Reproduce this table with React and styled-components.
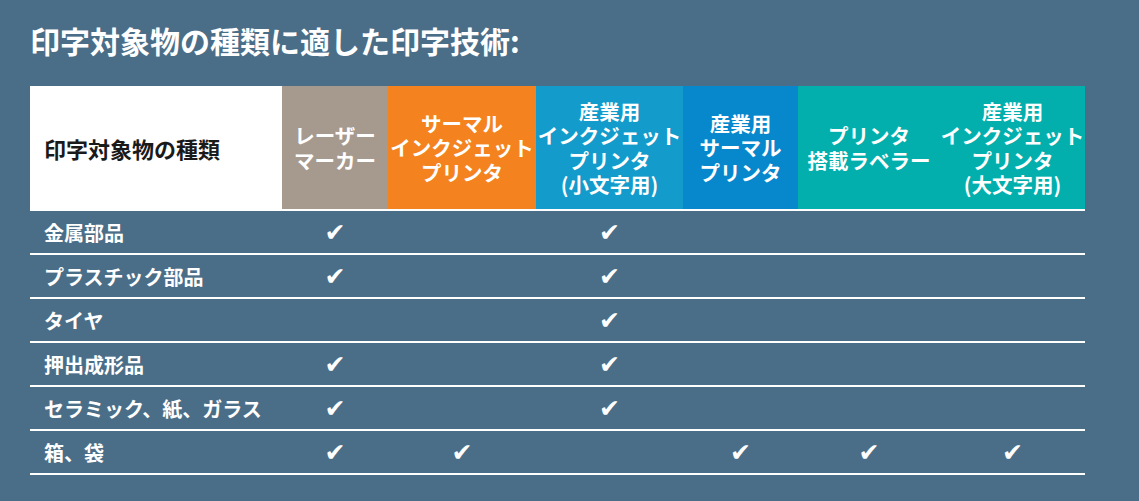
import React from 'react'
import styled, { createGlobalStyle } from 'styled-components'

const GlobalStyle = createGlobalStyle`
  html, body {
    margin: 0;
    padding: 0;
    background: #4b6e88;
  }
  body {
    font-family: "Noto Sans CJK JP", "Noto Sans", sans-serif;
    color: #fff;
  }
`

const Page = styled.div`
  width: 1139px;
  height: 501px;
  padding: 19px 0 0 30px;
  box-sizing: border-box;
  background: #4b6e88;
`

const Title = styled.h1`
  margin: 0 0 25px;
  font-size: 30px;
  line-height: 42px;
  font-weight: 700;
`

const Table = styled.div`
  width: 1055px;
  display: grid;
  grid-template-columns: 252px 106px 148px 147px 115px 142px 145px;
`

const Corner = styled.div`
  background: #fff;
  color: #1a1a1a;
  height: 123px;
  display: flex;
  align-items: center;
  padding-left: 14px;
  font-size: 22px;
  font-weight: 700;
`

const HeadCell = styled.div`
  background: ${p => p.$bg};
  height: 123px;
  display: flex;
  align-items: center;
  justify-content: center;
  text-align: center;
  font-size: 20.5px;
  line-height: 24.3px;
  font-weight: 700;
  white-space: nowrap;
`

const Label = styled.div`
  height: 42px;
  border-top: 2px solid #fff;
  display: flex;
  align-items: center;
  padding-left: 14px;
  font-size: 20px;
  font-weight: 700;
  ${p => p.$last && 'border-bottom: 2px solid #fff;'}
`

const Mark = styled.div`
  height: 42px;
  border-top: 2px solid #fff;
  display: flex;
  align-items: center;
  justify-content: center;
  font-family: "DejaVu Sans", sans-serif;
  font-size: 25px;
  ${p => p.$last && 'border-bottom: 2px solid #fff;'}
`

const columns = [
  { bg: '#a69a8f', lines: ['レーザー', 'マーカー'] },
  { bg: '#f4821f', lines: ['サーマル', 'インクジェット', 'プリンタ'] },
  { bg: '#139bcb', lines: ['産業用', 'インクジェット', 'プリンタ', '(小文字用)'] },
  { bg: '#0787cc', lines: ['産業用', 'サーマル', 'プリンタ'] },
  { bg: '#02afad', lines: ['プリンタ', '搭載ラベラー'] },
  { bg: '#02afad', lines: ['産業用', 'インクジェット', 'プリンタ', '(大文字用)'] },
]

const rows = [
  { name: '金属部品', marks: [1, 0, 1, 0, 0, 0] },
  { name: 'プラスチック部品', marks: [1, 0, 1, 0, 0, 0] },
  { name: 'タイヤ', marks: [0, 0, 1, 0, 0, 0] },
  { name: '押出成形品', marks: [1, 0, 1, 0, 0, 0] },
  { name: 'セラミック、紙、ガラス', marks: [1, 0, 1, 0, 0, 0] },
  { name: '箱、袋', marks: [1, 1, 0, 1, 1, 1] },
]

export default function App() {
  return (
    <>
      <GlobalStyle />
      <Page>
        <Title>印字対象物の種類に適した印字技術:</Title>
        <Table>
          <Corner>印字対象物の種類</Corner>
          {columns.map((col, i) => (
            <HeadCell key={i} $bg={col.bg}>
              <span>
                {col.lines.map((line, j) => (
                  <React.Fragment key={j}>
                    {j > 0 && <br />}
                    {line}
                  </React.Fragment>
                ))}
              </span>
            </HeadCell>
          ))}
          {rows.map((row, r) => {
            const last = r === rows.length - 1
            return (
              <React.Fragment key={row.name}>
                <Label $last={last}>{row.name}</Label>
                {row.marks.map((m, c) => (
                  <Mark key={c} $last={last}>
                    {m ? '✔' : ''}
                  </Mark>
                ))}
              </React.Fragment>
            )
          })}
        </Table>
      </Page>
    </>
  )
}
